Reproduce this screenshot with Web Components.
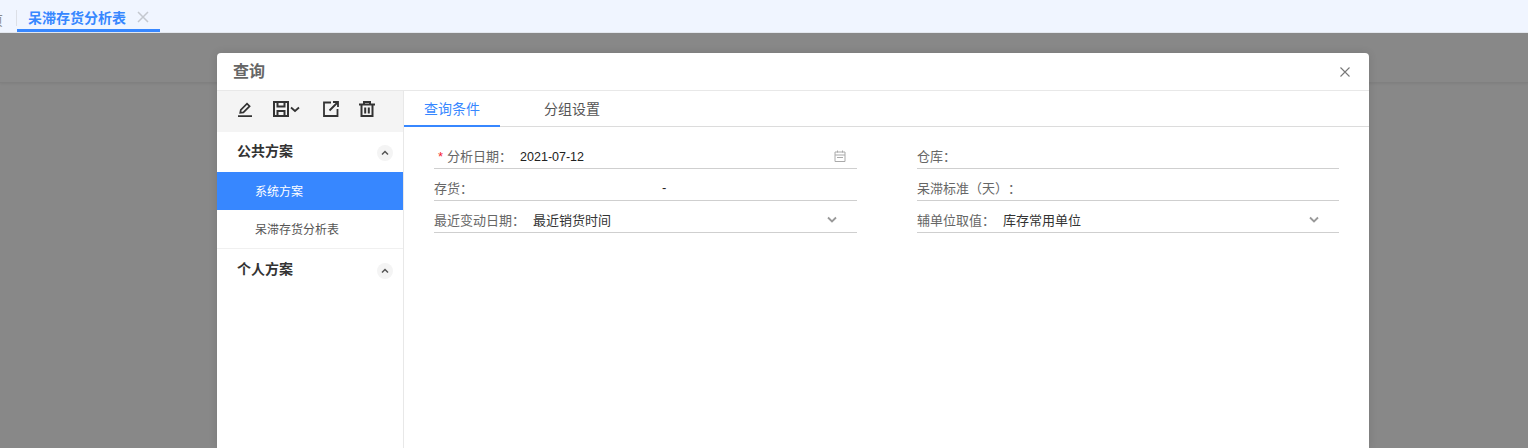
<!DOCTYPE html>
<html>
<head>
<meta charset="utf-8">
<style>
  html, body { margin: 0; height: 100%; overflow: hidden; }
  body { font-family: "Liberation Sans", "Noto Sans CJK SC", sans-serif; font-size: 13px; color: #333; background: #fff; text-spacing-trim: space-all; }
</style>
</head>
<body>
<app-shell>
  <top-tabs slot="tabs"></top-tabs>
  <query-dialog slot="dialog" heading="查询">
    <plan-panel slot="side"></plan-panel>
    <query-form slot="main"></query-form>
  </query-dialog>
</app-shell>

<script>
const font = `"Liberation Sans", "Noto Sans CJK SC", sans-serif`;

function makeEl(name, html) {
  const tpl = document.createElement('template');
  tpl.innerHTML = html;
  customElements.define(name, class extends HTMLElement {
    constructor() {
      super();
      this.attachShadow({ mode: 'open' });
      this.shadowRoot.appendChild(tpl.content.cloneNode(true));
      const h = this.shadowRoot.querySelector('[data-text]');
      if (h) h.textContent = this.getAttribute(h.dataset.text) || '';
    }
  });
}

makeEl('app-shell', `<style>
  :host { display: block; width: 1528px; height: 448px; position: relative; overflow: hidden; }
  .page { height: 100%; display: flex; flex-direction: column; }
  .under { flex: 1; background: #888; }
  .under div { height: 49px; border-bottom: 1px solid #808080; box-shadow: 0 1px 2px rgba(0,0,0,.06); }
  .mask { position: absolute; left: 0; right: 0; top: 33px; bottom: 0; display: flex; padding: 20px 0 0 217px; box-sizing: border-box; }
</style>
<div class="page"><slot name="tabs"></slot><div class="under"><div></div></div></div>
<div class="mask"><slot name="dialog"></slot></div>`);

makeEl('top-tabs', `<style>
  :host { display: flex; height: 33px; box-sizing: border-box; background: #f0f5ff; border-bottom: 1px solid #e4e8ef; font: 14px ${font}; }
  .prev { width: 17px; overflow: hidden; position: relative; flex: none; }
  .prev span { position: absolute; right: 14px; top: 10px; font-size: 13px; color: #8a8a8a; white-space: nowrap; }
  .prev::after { content: ""; position: absolute; right: 0; top: 10px; height: 16px; width: 1px; background: #dcdfe6; }
  .tab { width: 143px; height: 32px; box-sizing: border-box; border-bottom: 3px solid #3787ff; display: flex; align-items: center; padding: 4px 0 0 11px; gap: 11px; color: #3787ff; font-weight: 700; }
  svg { display: block; }
</style>
<div class="prev"><span>首页</span></div>
<div class="tab"><span>呆滞存货分析表</span>
<svg width="12" height="12" viewBox="0 0 12 12"><path d="M1 1l10 10M11 1L1 11" stroke="#c4c8cf" stroke-width="1.5" fill="none"/></svg></div>`);

makeEl('query-dialog', `<style>
  :host { display: flex; flex-direction: column; width: 1152px; height: 395px; background: #fff; border-radius: 4px 4px 0 0; font: 13px ${font}; flex: none; box-shadow: 0 0 8px rgba(0,0,0,.12); }
  header { height: 38px; box-sizing: border-box; border-bottom: 1px solid #e8e8e8; display: flex; align-items: center; justify-content: space-between; padding: 0 19px 0 16px; }
  h2 { margin: 0 0 4px; font-size: 16px; font-weight: 700; color: #666; }
  .body { flex: 1; display: flex; min-height: 0; }
  svg { display: block; }
</style>
<header><h2 data-text="heading"></h2>
<svg width="10" height="10" viewBox="0 0 10 10"><path d="M.5 .5l9 9M9.500 .5l-9 9" stroke="#777" stroke-width="1.100" fill="none"/></svg></header>
<div class="body"><slot name="side"></slot><slot name="main"></slot></div>`);

makeEl('plan-group', `<style>
  :host { display: flex; height: 40px; box-sizing: border-box; align-items: center; justify-content: space-between; padding: 0 10px 5px 20px; font-weight: 700; color: #333; font-size: 14px; }
  i { width: 16px; height: 16px; margin-top: 7px; border-radius: 50%; background: #f4f4f4; display: flex; align-items: center; justify-content: center; }
  svg { display: block; }
</style>
<slot></slot><i><svg width="8" height="6" viewBox="0 0 8 6"><path d="M1 4.500L4 1.500 7 4.500" stroke="#555" stroke-width="1.500" fill="none"/></svg></i>`);

makeEl('plan-item', `<style>
  :host { display: flex; height: 38px; box-sizing: border-box; align-items: center; padding: 0 0 2px 38px; font-size: 12px; color: #555; }
  :host([active]) { background: #3787ff; color: #fff; }
</style><slot></slot>`);

makeEl('plan-panel', `<style>
  :host { display: flex; flex-direction: column; width: 187px; box-sizing: border-box; border-right: 1px solid #e8e8e8; flex: none; }
  .tools { height: 41px; box-sizing: border-box; background: #f4f4f4; display: flex; align-items: center; flex: none; padding: 0 0 5px 20px; }
  .tools svg { display: block; flex: none; }
  .sep { border-top: 1px solid #f0f0f0; margin-bottom: 1px; }
</style>
<div class="tools">
  <svg width="16" height="16" viewBox="0 0 16 16" style="margin-right:20px"><path d="M1 15.200h14M3.200 11.800l.6-3L10 2.600l2.600 2.600-6.200 6.200z" stroke="#333" stroke-width="1.700" fill="none"/></svg>
  <svg width="16" height="16" viewBox="0 0 16 16"><path d="M1 1h14v14H1zM4.500 1v4.500h7V1M4.500 15v-5h7v5" stroke="#333" stroke-width="2" fill="none"/></svg>
  <svg width="12" height="16" viewBox="0 0 12 16" style="margin-right:22px"><path d="M2 6.500l4 3.500 4-3.500" stroke="#333" stroke-width="1.800" fill="none"/></svg>
  <svg width="16" height="16" viewBox="0 0 16 16" style="margin-right:20px"><path d="M8 1.500H1v13.500h13.500V8M6.500 9.500L15 1M10 1h5v5" stroke="#333" stroke-width="1.800" fill="none"/></svg>
  <svg width="16" height="16" viewBox="0 0 16 16"><path d="M0 3.500h16M5 3.500V1h6v2.500M2.500 3.500V15h11V3.500M6.200 6.500v6M9.800 6.500v6" stroke="#333" stroke-width="2" fill="none"/></svg>
</div>
<plan-group>公共方案</plan-group>
<plan-item active>系统方案</plan-item>
<plan-item>呆滞存货分析表</plan-item>
<div class="sep"></div>
<plan-group>个人方案</plan-group>`);

makeEl('form-field', `<style>
  :host { display: flex; height: 32px; box-sizing: border-box; border-bottom: 1px solid #cfcfcf; align-items: center; font-size: 13px; color: #333; padding-top: 6px; }
  .label { color: #666; flex: none; }
  ::slotted([slot="icon"]) { margin-left: auto; }
</style>
<span class="label"><slot name="label"></slot></span><slot></slot><slot name="icon"></slot>`);

makeEl('form-chevron', `<style>
  :host { display: block; width: 10px; height: 8px; margin-right: 20px; }
  svg { display: block; }
</style><svg width="10" height="8" viewBox="0 0 10 8"><path d="M1 1.500l4 4 4-4" stroke="#999" stroke-width="1.800" fill="none"/></svg>`);

makeEl('query-form', `<style>
  :host { flex: 1; display: flex; flex-direction: column; min-width: 0; font-size: 14px; }
  nav { height: 36px; box-sizing: border-box; border-bottom: 1px solid #dcdcdc; display: flex; flex: none; }
  nav span { display: flex; align-items: center; color: #555; padding: 0 20px; height: 34px; }
  nav span.on { color: #3787ff; border-bottom: 2px solid #3787ff; width: 56px; }
  nav span + span { margin-left: 24px; }
  .grid { display: grid; grid-template-columns: 423px 422px; column-gap: 60px; padding: 10px 0 0 30px; }
  .star { color: #f5222d; margin: 0 4px 0 4px; }
  svg { display: block; }
</style>
<nav><span class="on">查询条件</span><span>分组设置</span></nav>
<div class="grid">
  <form-field><span slot="label"><span class="star">*</span>分析日期：</span><span style="margin:3px 0 0 8px;color:#222;font-size:12.500px">2021-07-12</span>
    <svg slot="icon" style="margin-right:11px" width="12" height="12" viewBox="0 0 12 12"><path d="M1 2h10v9.500H1zM1 5h10M3.500 .5v2M8.500 .5v2M3 7.500h6" stroke="#aaa" stroke-width="1" fill="none"/></svg></form-field>
  <form-field><span slot="label">仓库：</span></form-field>
  <form-field><span slot="label">存货：</span><span style="margin-left:189px;color:#222">-</span></form-field>
  <form-field><span slot="label">呆滞标准（天）：</span></form-field>
  <form-field><span slot="label">最近变动日期：</span><span style="margin-left:8px">最近销货时间</span><form-chevron slot="icon"></form-chevron></form-field>
  <form-field><span slot="label">辅单位取值：</span><span style="margin-left:8px">库存常用单位</span><form-chevron slot="icon"></form-chevron></form-field>
</div>`);
</script>
</body>
</html>
